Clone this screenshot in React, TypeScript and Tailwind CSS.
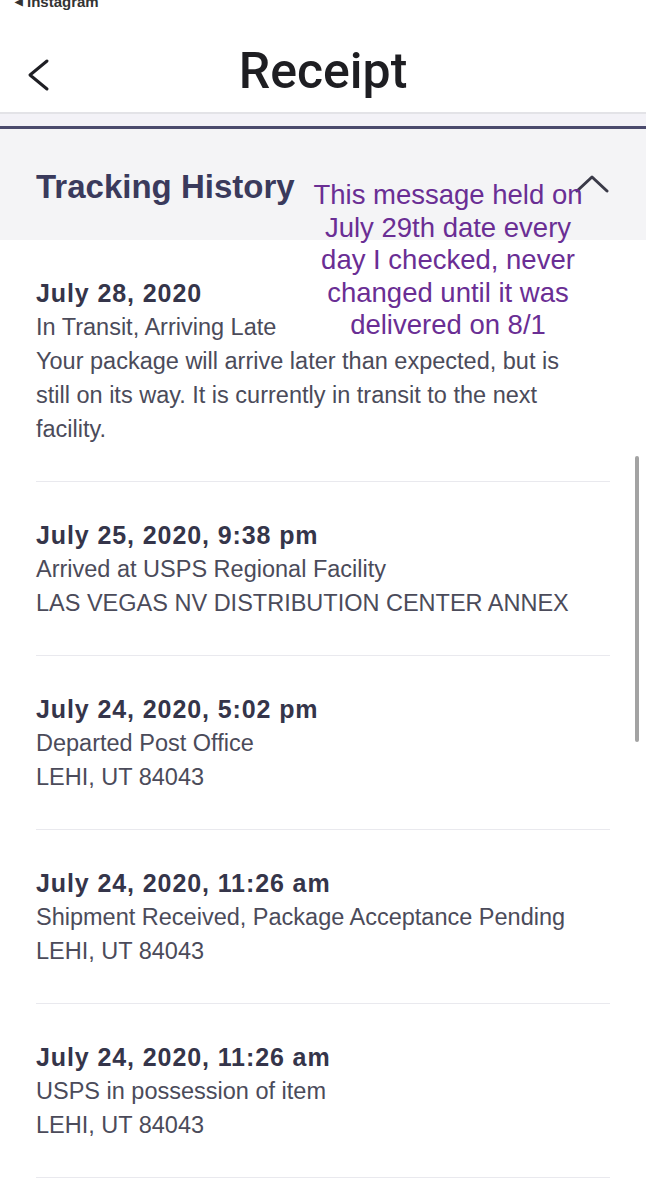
const entries = [
  {
    date: "July 28, 2020",
    lines: [
      "In Transit, Arriving Late",
      "Your package will arrive later than expected, but is still on its way. It is currently in transit to the next facility.",
    ],
  },
  {
    date: "July 25, 2020, 9:38 pm",
    lines: ["Arrived at USPS Regional Facility", "LAS VEGAS NV DISTRIBUTION CENTER ANNEX"],
  },
  {
    date: "July 24, 2020, 5:02 pm",
    lines: ["Departed Post Office", "LEHI, UT 84043"],
  },
  {
    date: "July 24, 2020, 11:26 am",
    lines: ["Shipment Received, Package Acceptance Pending", "LEHI, UT 84043"],
  },
  {
    date: "July 24, 2020, 11:26 am",
    lines: ["USPS in possession of item", "LEHI, UT 84043"],
  },
];

const TrackingEntry = ({ date, lines }: { date: string; lines: string[] }) => (
  <div className="mx-[36px] py-[35.5px] border-b border-[#e9e9ee]">
    <div className="text-[25px] leading-[34px] font-bold tracking-[0.9px] text-[#35354a]">
      {date}
    </div>
    {lines.map((line, i) => (
      <div key={i} className="pr-[22px] text-[23.5px] leading-[34px] text-[#4b4b5a]">
        {line}
      </div>
    ))}
  </div>
);

export default function App() {
  return (
    <div
      className="relative w-[646px] h-[1200px] overflow-hidden bg-white"
      style={{ fontFamily: '"Liberation Sans", Arial, sans-serif' }}
    >
      {/* status bar, cut off at the top */}
      <div className="h-[10px] overflow-hidden">
        <div className="mt-[-8px] pl-[15px] flex items-center gap-[4px] text-[15px] leading-[19px] font-bold text-[#333]">
          <span className="text-[10px]">◀</span>
          <span>Instagram</span>
        </div>
      </div>

      {/* header */}
      <div className="h-[104px] pt-[31px] border-b-2 border-[#e3e3e7]">
        <div className="grid grid-cols-[1fr_auto_1fr] items-center h-[60px]">
          <div className="pl-[26px] mt-[8px]">
            <svg width="24" height="34" viewBox="0 0 24 34" fill="none">
              <path
                d="M21 3 L4 17 L21 31"
                stroke="#1f1f24"
                strokeWidth="3"
                strokeLinecap="round"
                strokeLinejoin="round"
              />
            </svg>
          </div>
          <div
            className="text-[50px] leading-[60px] font-medium text-[#1e1e22]"
            style={{ fontFamily: "Roboto, sans-serif" }}
          >
            Receipt
          </div>
          <div />
        </div>
      </div>
      <div className="h-[12px] bg-[#f3f2f7]" />
      <div className="h-[3px] bg-[#4b4a6d]" />

      {/* tracking history header */}
      <div className="h-[111px] bg-[#f4f4f6] flex items-center justify-between pl-[36px] pr-[37px]">
        <div className="mt-[4px] text-[33px] leading-[33px] font-bold text-[#3a3a5c]">Tracking History</div>
        <svg width="34" height="20" viewBox="0 0 34 20" fill="none" className="mt-[-2px]">
          <path
            d="M2 17 L17 3 L32 17"
            stroke="#3a3a48"
            strokeWidth="3"
            strokeLinecap="round"
            strokeLinejoin="round"
          />
        </svg>
      </div>

      {/* entries */}
      <div>
        {entries.map((e, i) => (
          <TrackingEntry key={i} date={e.date} lines={e.lines} />
        ))}
      </div>

      {/* annotation written over the screenshot */}
      <div className="absolute left-[297px] top-[179px] w-[302px] text-center text-[27.5px] leading-[32.5px] text-[#6a2e94]">
        This message held on
        <br />
        July 29th date every
        <br />
        day I checked, never
        <br />
        changed until it was
        <br />
        delivered on 8/1
      </div>

      {/* scrollbar */}
      <div className="absolute left-[635px] top-[456px] w-[4px] h-[286px] rounded-full bg-[#a3a3a3]" />
    </div>
  );
}
